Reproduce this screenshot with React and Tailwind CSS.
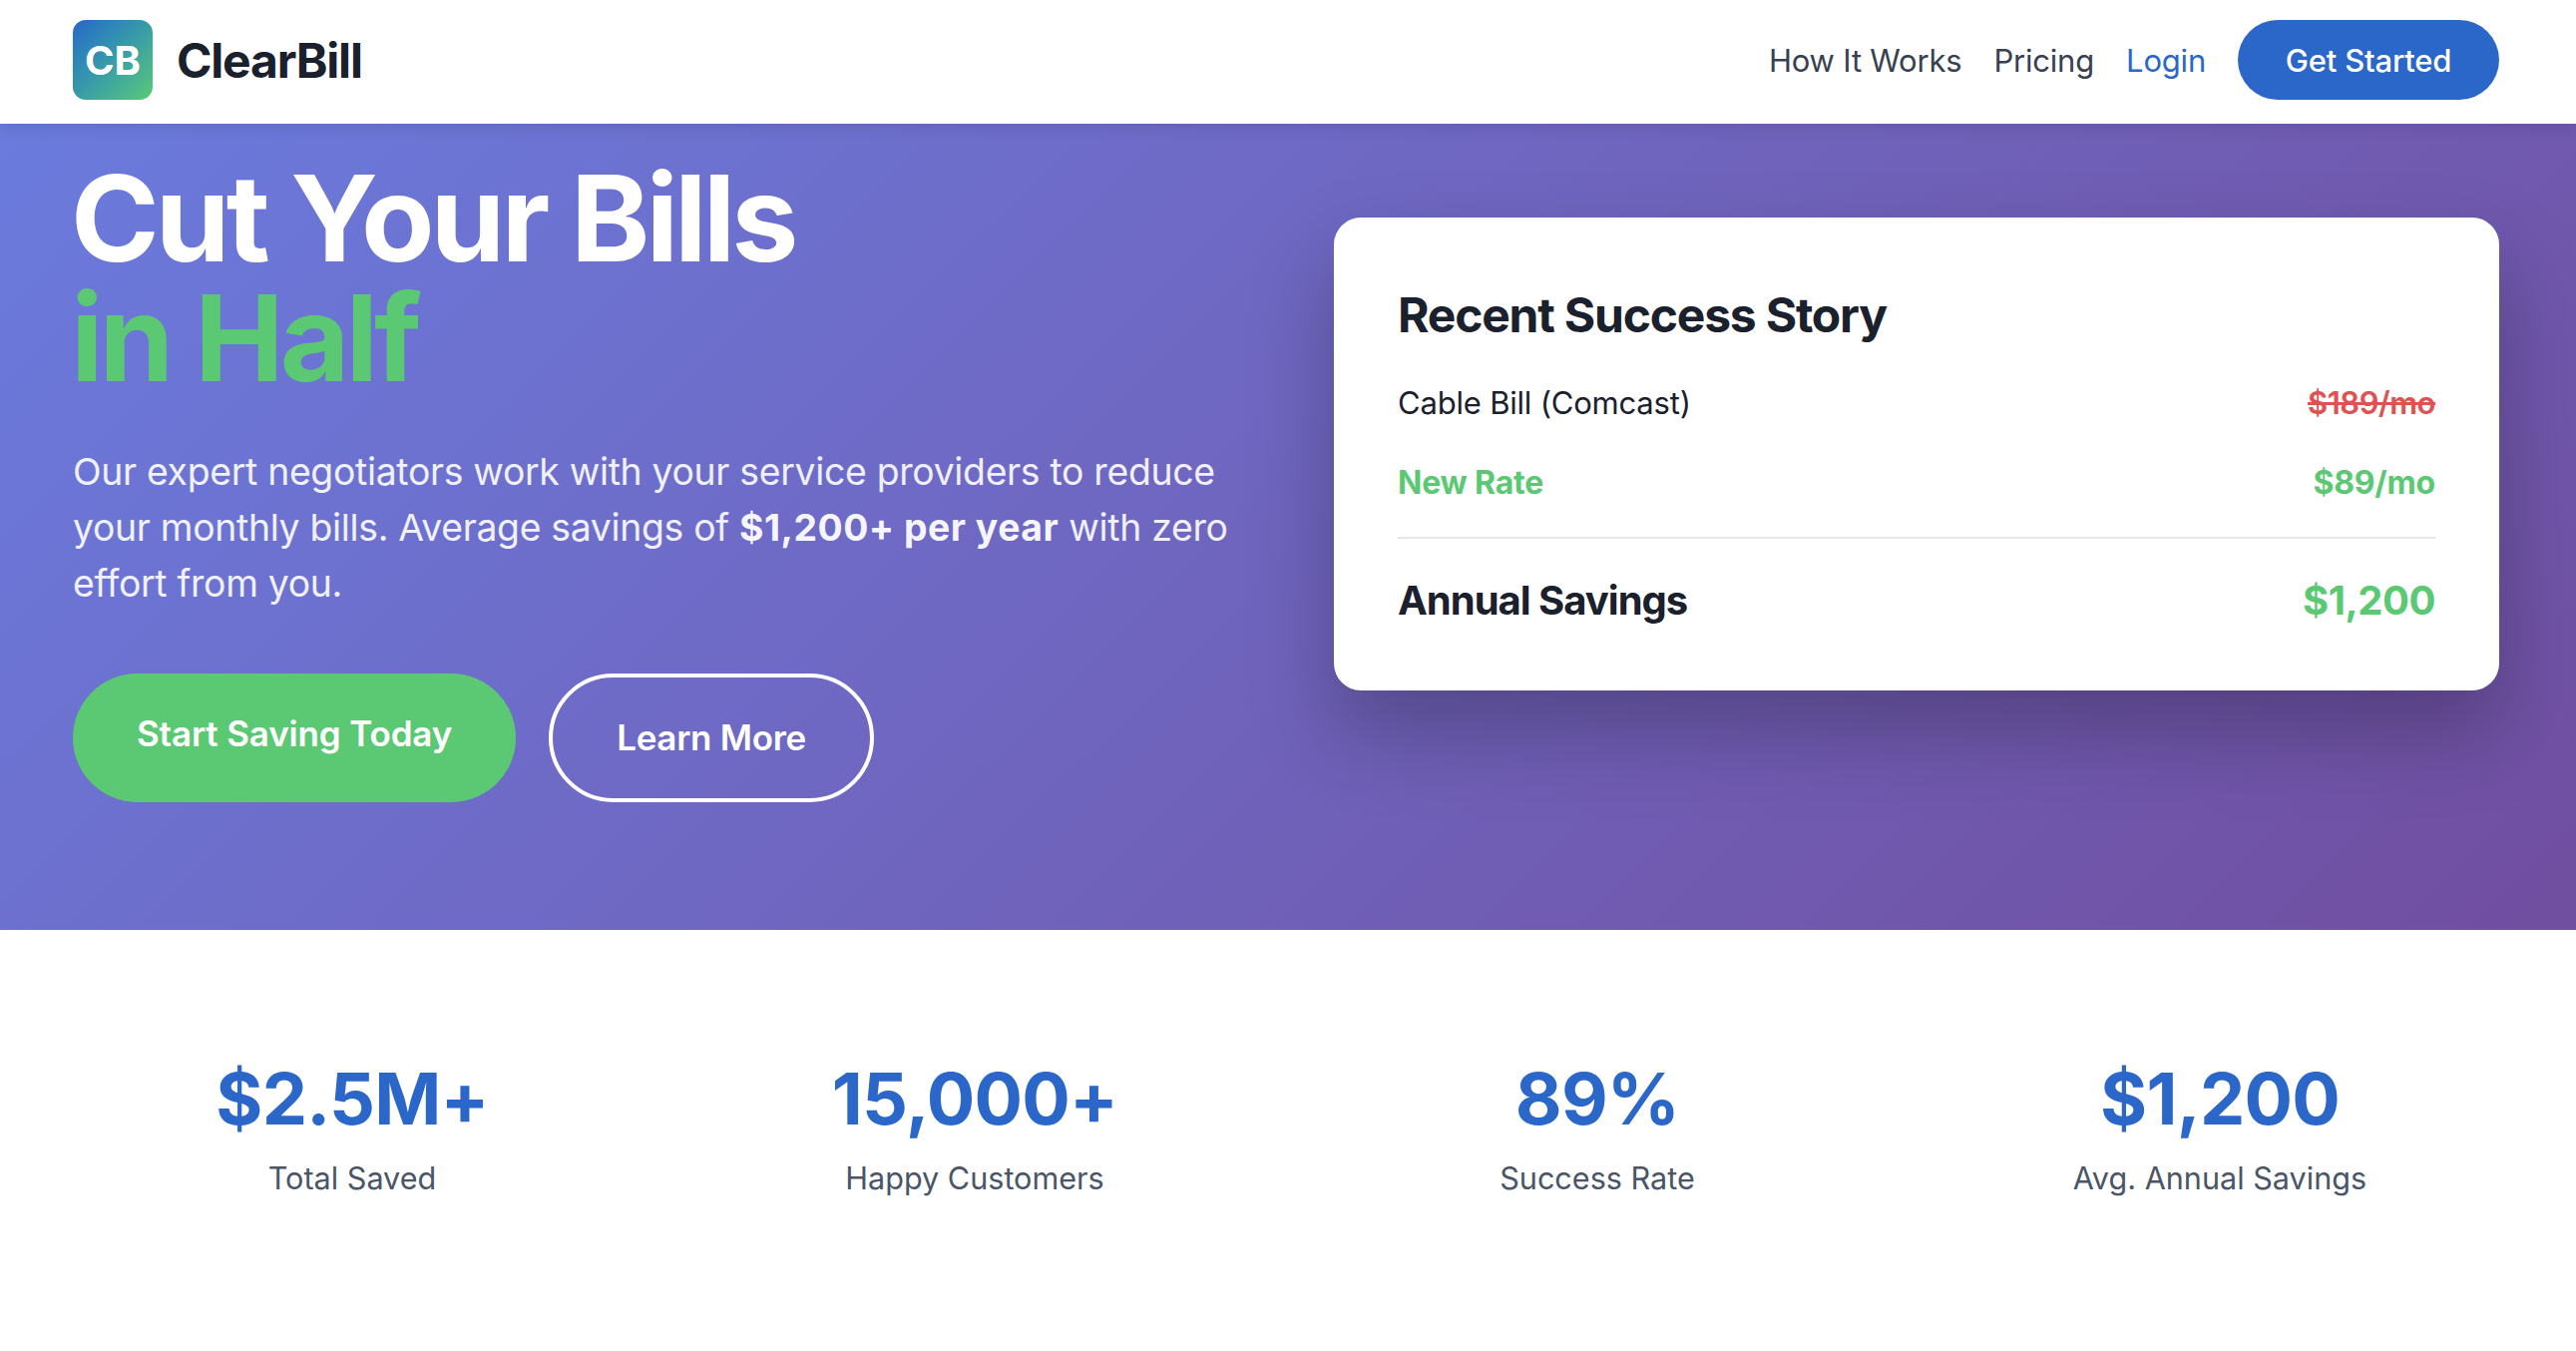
const stats = [
  { value: "$2.5M+", label: "Total Saved" },
  { value: "15,000+", label: "Happy Customers" },
  { value: "89%", label: "Success Rate" },
  { value: "$1,200", label: "Avg. Annual Savings" },
]

function Navbar() {
  return (
    <nav className="relative z-10 flex h-[124px] items-center justify-between bg-white pb-[4px] pl-[73px] pr-[77px] shadow-[0_2px_16px_rgba(0,0,0,0.12)]">
      <div className="flex items-center gap-[24px]">
        <div className="flex h-[80px] w-[80px] items-center justify-center rounded-[13px] bg-linear-135 from-[#2b66c9] to-[#5bc973] pt-[2px] text-[40px] font-bold text-white">
          CB
        </div>
        <span className="pt-[2px] text-[48px] font-bold tracking-[-1.2px] text-[#1a202c]">ClearBill</span>
      </div>
      <div className="flex items-center gap-[32px] text-[31px] tracking-[-0.2px] text-[#374151]">
        <a className="pt-[2px]">How It Works</a>
        <a className="pt-[2px]">Pricing</a>
        <a className="pt-[2px] text-[#2b66c9]">Login</a>
        <a className="flex h-[80px] w-[262px] items-center justify-center rounded-full bg-[#2b66c9] pt-[2px] font-medium text-white">
          Get Started
        </a>
      </div>
    </nav>
  )
}

function Hero() {
  return (
    <section className="grid h-[808px] grid-cols-2 items-start gap-[96px] bg-linear-135 from-[#6a7bdd] to-[#704ea0] pl-[73px] pr-[77px] pt-[35px]">
      <div>
        <h1 className="mb-[46px] -ml-[2px] text-[120px] leading-[120px] font-bold tracking-[-3.9px] text-white">
          Cut Your Bills
          <br />
          <span className="text-[#5bc973]">in Half</span>
        </h1>
        <p className="mb-[62px] text-[37.33px] leading-[56px] tracking-[-0.3px] text-white/90">
          Our expert negotiators work with your service providers to reduce your monthly bills. Average savings of{" "}
          <strong className="font-bold tracking-[0.5px] text-white/95">$1,200+ per year</strong> with zero effort from you.
        </p>
        <div className="flex gap-[33px] text-[35px] leading-[47px] font-semibold tracking-[-0.3px] text-white">
          <a className="rounded-full bg-[#5bc973] px-[64px] py-[37px] tracking-[-0.15px]">Start Saving Today</a>
          <a className="rounded-full border-[4px] border-white px-[64px] py-[37px]">Learn More</a>
        </div>
      </div>
      <div className="mt-[59px] h-[474px] rounded-[27px] bg-white px-[64px] pt-[70px] shadow-[0_42px_84px_rgba(0,0,0,0.25)]">
        <h3 className="mb-[36px] text-[48px] leading-[56px] font-bold tracking-[-1.2px] text-[#1a202c]">
          Recent Success Story
        </h3>
        <div className="flex justify-between text-[31px] leading-[48px] tracking-[-0.2px] text-[#1a202c]">
          <span>Cable Bill (Comcast)</span>
          <span className="font-semibold tracking-[-0.5px] text-[#e05252] line-through">$189/mo</span>
        </div>
        <div className="mt-[32px] flex justify-between text-[32px] leading-[48px] font-bold tracking-[-0.2px] text-[#5bc973]">
          <span>New Rate</span>
          <span>$89/mo</span>
        </div>
        <div className="mt-[30px] flex justify-between border-t-[2px] border-[#e5e7eb] pt-[34px] text-[40px] leading-[56px] font-bold">
          <span className="tracking-[-1px] text-[#1a202c]">Annual Savings</span>
          <span className="tracking-[-0.5px] text-[#5bc973]">$1,200</span>
        </div>
      </div>
    </section>
  )
}

export default function App() {
  return (
    <div className="min-h-[1354px] bg-white font-['Inter',sans-serif] antialiased">
      <Navbar />
      <Hero />
      <section className="grid grid-cols-4 gap-[64px] pl-[73px] pr-[77px] pt-[126px]">
        {stats.map((s) => (
          <div key={s.label} className="text-center">
            <div className="text-[72px] leading-[86px] font-bold tracking-[-0.8px] text-[#2b66c9]">{s.value}</div>
            <div className="mt-[14px] text-[30.6px] leading-[45px] text-[#4a5568]">{s.label}</div>
          </div>
        ))}
      </section>
    </div>
  )
}
